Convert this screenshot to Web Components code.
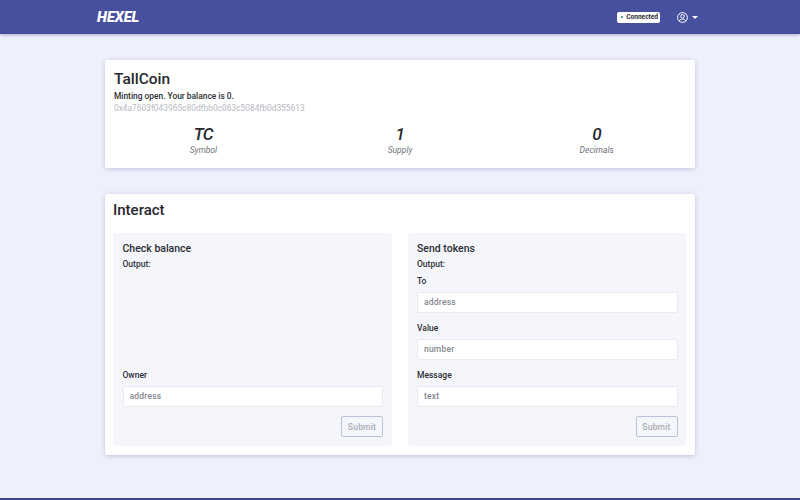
<!DOCTYPE html>
<html>
<head>
<meta charset="utf-8">
<title>TallCoin</title>
<style>
  html, body { margin: 0; padding: 0; height: 100%; overflow: hidden; }
  body { background: #eef0fc; font-family: Roboto, "Liberation Sans", sans-serif; color: #2b2d33; }
</style>
</head>
<body>
<hexel-app>
  <hexel-header slot="header"></hexel-header>
  <token-card name="TallCoin" status="Minting open. Your balance is 0." address="0x4a7603f043965c80dfbb0c063c5084fb0d355613">
    <token-stat value="TC" label="Symbol"></token-stat>
    <token-stat value="1" label="Supply"></token-stat>
    <token-stat value="0" label="Decimals"></token-stat>
  </token-card>
  <interact-card>
    <method-form title="Check balance" spacer>
      <form-field label="Owner" placeholder="address"></form-field>
    </method-form>
    <method-form title="Send tokens">
      <form-field label="To" placeholder="address"></form-field>
      <form-field label="Value" placeholder="number"></form-field>
      <form-field label="Message" placeholder="text"></form-field>
    </method-form>
  </interact-card>
</hexel-app>
<script>
// page frame: header on top, cards in a centred column, dark line at the bottom
class HexelApp extends HTMLElement {
  constructor() {
    super();
    this.attachShadow({ mode: 'open' });
    this.shadowRoot.innerHTML = `
    <style>
      :host { display: flex; flex-direction: column; height: 500px; }
      main { flex: 1; width: 590px; margin: 0 auto; padding-top: 26px; display: flex; flex-direction: column; gap: 26px; }
      .foot { height: 2px; background: #3f4690; }
    </style>
    <slot name="header"></slot>
    <main><slot></slot></main>
    <div class="foot"></div>`;
  }
}

class HexelHeader extends HTMLElement {
  constructor() {
    super();
    this.attachShadow({ mode: 'open' });
    this.shadowRoot.innerHTML = `
    <style>
      :host { display: flex; align-items: center; height: 34px; background: #474f9f; box-shadow: 0 1px 3px rgba(50,55,110,.35); padding: 0 102px 0 97px; }
      .logo { font-size: 14.5px; font-weight: 900; font-style: italic; color: #fff; }
      .badge { margin-left: auto; display: flex; align-items: center; gap: 3px; height: 11px; padding: 0 2px 0 4px; background: #fff; border-radius: 2px; font-size: 6.6px; font-weight: 700; color: #2b2d33; letter-spacing: -.02px; }
      .dot { width: 2px; height: 2px; border-radius: 50%; background: #1f8a80; }
      .user { margin-left: 17px; display: flex; align-items: center; gap: 4px; }
      .caret { width: 0; height: 0; border: 3px solid transparent; border-top-color: #fff; border-bottom: 0; }
      svg { display: block; }
    </style>
    <span class="logo">HEXEL</span>
    <span class="badge"><span class="dot"></span>Connected</span>
    <span class="user">
      <svg width="11" height="11" viewBox="0 0 11 11" fill="none" stroke="#fff" stroke-width="1">
        <circle cx="5.5" cy="5.5" r="4.9"/>
        <circle cx="5.5" cy="4.3" r="1.8"/>
        <path d="M2.3 9.1c.6-1.4 1.8-2 3.2-2s2.6.6 3.2 2"/>
      </svg>
      <span class="caret"></span>
    </span>`;
  }
}

class TokenCard extends HTMLElement {
  constructor() {
    super();
    this.attachShadow({ mode: 'open' });
  }
  connectedCallback() {
    this.shadowRoot.innerHTML = `
    <style>
      :host { display: block; height: 108px; box-sizing: border-box; background: #fff; border-radius: 2px; box-shadow: 0 1px 5px rgba(60,65,120,.25); padding: 10px 0 0; }
      .top { padding: 0 9px; }
      h1 { margin: 0; font-size: 15.5px; line-height: 18px; font-weight: 500; color: #26282e; }
      .status { font-size: 8.4px; line-height: 10px; margin-top: 3px; font-weight: 500; color: #2b2d33; }
      .addr { font-size: 8.4px; line-height: 10px; margin-top: 2px; color: #b7b9bf; }
      .stats { display: grid; grid-template-columns: repeat(3, 1fr); margin-top: 11px; }
    </style>
    <div class="top">
      <h1>${this.getAttribute('name')}</h1>
      <div class="status">${this.getAttribute('status')}</div>
      <div class="addr">${this.getAttribute('address')}</div>
    </div>
    <div class="stats"><slot></slot></div>`;
  }
}

class TokenStat extends HTMLElement {
  constructor() {
    super();
    this.attachShadow({ mode: 'open' });
  }
  connectedCallback() {
    this.shadowRoot.innerHTML = `
    <style>
      :host { display: block; text-align: center; font-style: italic; }
      .v { font-size: 17px; line-height: 20px; font-weight: 500; letter-spacing: -.6px; color: #26282e; }
      .l { font-size: 8.5px; line-height: 11px; margin-top: 1px; color: #6f7278; }
    </style>
    <div class="v">${this.getAttribute('value')}</div>
    <div class="l">${this.getAttribute('label')}</div>`;
  }
}

class InteractCard extends HTMLElement {
  constructor() {
    super();
    this.attachShadow({ mode: 'open' });
    this.shadowRoot.innerHTML = `
    <style>
      :host { display: block; height: 261px; box-sizing: border-box; background: #fff; border-radius: 2px; box-shadow: 0 1px 5px rgba(60,65,120,.25); padding: 7px 9px 0 8px; }
      h2 { margin: 0; font-size: 15px; line-height: 18px; font-weight: 500; color: #26282e; }
      .cols { display: grid; grid-template-columns: 1fr 1fr; gap: 16px; margin-top: 14px; height: 213px; }
    </style>
    <h2>Interact</h2>
    <div class="cols"><slot></slot></div>`;
  }
}

class MethodForm extends HTMLElement {
  constructor() {
    super();
    this.attachShadow({ mode: 'open' });
  }
  connectedCallback() {
    this.shadowRoot.innerHTML = `
    <style>
      :host { display: flex; flex-direction: column; box-sizing: border-box; background: #f5f6fb; border-radius: 3px; padding: 9px 8.5px 9px 9.5px; }
      h3 { margin: 0; font-size: 10.5px; line-height: 13px; font-weight: 500; color: #2b2d33; }
      .out { font-size: 8.5px; line-height: 10px; margin-top: 4px; font-weight: 500; color: #2b2d33; }
      .fields { flex: 1; display: flex; flex-direction: column; justify-content: flex-end; gap: 10px; }
      .actions { display: flex; justify-content: flex-end; margin-top: 9px; }
      button { width: 42px; height: 21px; padding: 0; background: transparent; border: 1px solid #bfc1da; border-radius: 2px; font: 500 8.5px Roboto, "Liberation Sans", sans-serif; color: #abadb5; letter-spacing: .2px; }
    </style>
    <h3>${this.getAttribute('title')}</h3>
    <div class="out">Output:</div>
    <div class="fields"><slot></slot></div>
    <div class="actions"><button disabled>Submit</button></div>`;
  }
}

class FormField extends HTMLElement {
  constructor() {
    super();
    this.attachShadow({ mode: 'open' });
  }
  connectedCallback() {
    this.shadowRoot.innerHTML = `
    <style>
      :host { display: block; }
      label { display: block; font-size: 8.5px; line-height: 10px; font-weight: 500; color: #2b2d33; margin-bottom: 6px; }
      input { display: block; width: 100%; box-sizing: border-box; height: 21px; padding: 0 6px 1px; background: #fff; border: 1px solid #e8e9f1; border-radius: 2px; font: 500 8.5px Roboto, "Liberation Sans", sans-serif; outline: none; }
      input::placeholder { color: #85878e; opacity: 1; letter-spacing: .2px; }
    </style>
    <label>${this.getAttribute('label')}</label>
    <input placeholder="${this.getAttribute('placeholder')}">`;
  }
}

customElements.define('hexel-app', HexelApp);
customElements.define('hexel-header', HexelHeader);
customElements.define('token-card', TokenCard);
customElements.define('token-stat', TokenStat);
customElements.define('interact-card', InteractCard);
customElements.define('method-form', MethodForm);
customElements.define('form-field', FormField);
</script>
</body>
</html>
